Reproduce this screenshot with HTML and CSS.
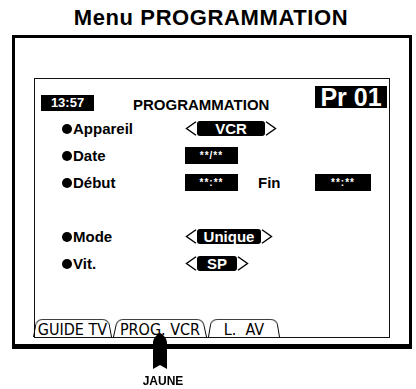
FILE: index.html
```html
<!DOCTYPE html>
<html lang="fr">
<head>
<meta charset="utf-8">
<title>Menu PROGRAMMATION</title>
<link rel="stylesheet" href="styles.css">
</head>
<body>
	<h1 class="title">Menu PROGRAMMATION</h1>
	<div class="tv">
		<div class="screen">
			<div class="head">
				<span class="clock">13:57</span>
				<span class="head-title">PROGRAMMATION</span>
				<span class="prog">Pr 01</span>
			</div>
			<div class="rows">
				<div class="label"><i class="dot"></i>Appareil</div>
				<div class="value">
					<span class="pick">
						<svg class="arr" viewBox="0 0 11 15"><polyline points="10.5,0.8 1,7.5 10.5,14.2"/></svg>
						<b class="w-vcr">VCR</b>
						<svg class="arr" viewBox="0 0 11 15"><polyline points="0.5,0.8 10,7.5 0.5,14.2"/></svg>
					</span>
				</div>
				<div class="label"><i class="dot"></i>Date</div>
				<div class="value"><span class="field">**/**</span></div>
				<div class="label"><i class="dot"></i>Début</div>
				<div class="value">
					<span class="field">**:**</span>
					<span class="fin">Fin</span>
					<span class="field wide">**:**</span>
				</div>
				<div class="label"></div>
				<div class="value"></div>
				<div class="label"><i class="dot"></i>Mode</div>
				<div class="value">
					<span class="pick">
						<svg class="arr" viewBox="0 0 11 15"><polyline points="10.5,0.8 1,7.5 10.5,14.2"/></svg>
						<b class="w-unique">Unique</b>
						<svg class="arr" viewBox="0 0 11 15"><polyline points="0.5,0.8 10,7.5 0.5,14.2"/></svg>
					</span>
				</div>
				<div class="label"><i class="dot"></i>Vit.</div>
				<div class="value">
					<span class="pick">
						<svg class="arr" viewBox="0 0 11 15"><polyline points="10.5,0.8 1,7.5 10.5,14.2"/></svg>
						<b class="w-sp">SP</b>
						<svg class="arr" viewBox="0 0 11 15"><polyline points="0.5,0.8 10,7.5 0.5,14.2"/></svg>
					</span>
				</div>
			</div>
			<div class="tabs">
				<span class="tab t1">GUIDE TV</span>
				<span class="tab t2">PROG. VCR</span>
				<span class="tab t3">L.&nbsp;&nbsp;AV</span>
			</div>
		</div>
	</div>
	<div class="pointer">
		<svg class="marker" viewBox="0 0 14 36"><path d="M7 0 C3 2 0 6 0 10 L0 36 L7 32 L14 36 L14 10 C14 6 11 2 7 0 Z"/></svg>
		<span class="jaune">JAUNE</span>
	</div>
</body>
</html>
```

FILE: styles.css
```css
body { margin:0; background:#fff; color:#000; font-family:"Liberation Sans", Arial, sans-serif; }
.title { margin:0; padding:5px 0 0 6px; height:35px; box-sizing:border-box; font-size:22px; line-height:25px; font-weight:bold; text-align:center; letter-spacing:0.6px; }

.tv { width:400px; height:314px; box-sizing:border-box; margin-left:12px; border:3px solid #000; border-bottom-width:5px; padding:40px 19px 6px; }
.screen { height:100%; box-sizing:border-box; border:1px solid #111; display:flex; flex-direction:column; }

.head { display:flex; align-items:flex-start; padding:7px 2px 0 6px; }
.clock { margin-top:9px; width:53px; height:16px; background:#000; color:#fff; font-size:13px; font-weight:bold; line-height:16px; text-align:center; }
.head-title { margin:11px 0 0 39px; font-size:15px; font-weight:bold; line-height:16px; }
.prog { margin-left:auto; width:72px; height:22px; background:#000; color:#fff; font-size:25px; font-weight:bold; line-height:22px; text-align:center; }

.rows { display:grid; grid-template-columns:123px 1fr; grid-auto-rows:27px; align-items:center; margin-top:2px; padding-left:27px; }
.label { display:flex; align-items:center; font-size:15px; font-weight:bold; }
.dot { display:inline-block; width:10px; height:10px; margin-right:1px; border-radius:50%; background:#000; }
.value { display:flex; align-items:center; }

.pick { display:inline-flex; align-items:center; }
.arr { width:12px; height:15px; }
.arr polyline { fill:none; stroke:#000; stroke-width:1.4; }
.pick b { height:15px; background:#000; color:#fff; border-radius:3px; font-size:15px; line-height:15px; text-align:center; }
.w-vcr { width:68px; }
.w-unique { width:64px; }
.w-sp { width:40px; }

.field { width:53px; height:17px; background:#000; color:#fff; font-size:10px; font-weight:bold; line-height:17px; letter-spacing:1px; text-align:center; }
.field.wide { width:56px; }
.fin { width:77px; box-sizing:border-box; padding-left:20px; font-size:15px; font-weight:bold; }

.tabs { margin-top:auto; display:flex; gap:1px; height:20px; margin-left:-2px; }
.tab { position:relative; box-sizing:border-box; height:20px; padding-top:5px; font-family:"Liberation Sans Narrow", "DejaVu Sans Condensed", "Liberation Sans", sans-serif; font-size:16px; line-height:16px; text-align:center; }
.tab::before { content:""; position:absolute; left:0; top:0; right:0; bottom:0; border:1.3px solid #000; border-bottom:0; border-radius:7px 7px 0 0; transform:perspective(30px) rotateX(8deg); transform-origin:bottom; }
.t1 { width:79px; }
.t2 { width:94px; }
.t3 { width:72px; }

.pointer { position:relative; width:40px; margin:-16px 0 0 140px; display:flex; flex-direction:column; align-items:center; }
.marker { width:14px; height:36px; }
.jaune { margin:5px 0 0 6px; font-size:12px; font-weight:bold; line-height:14px; }
```
